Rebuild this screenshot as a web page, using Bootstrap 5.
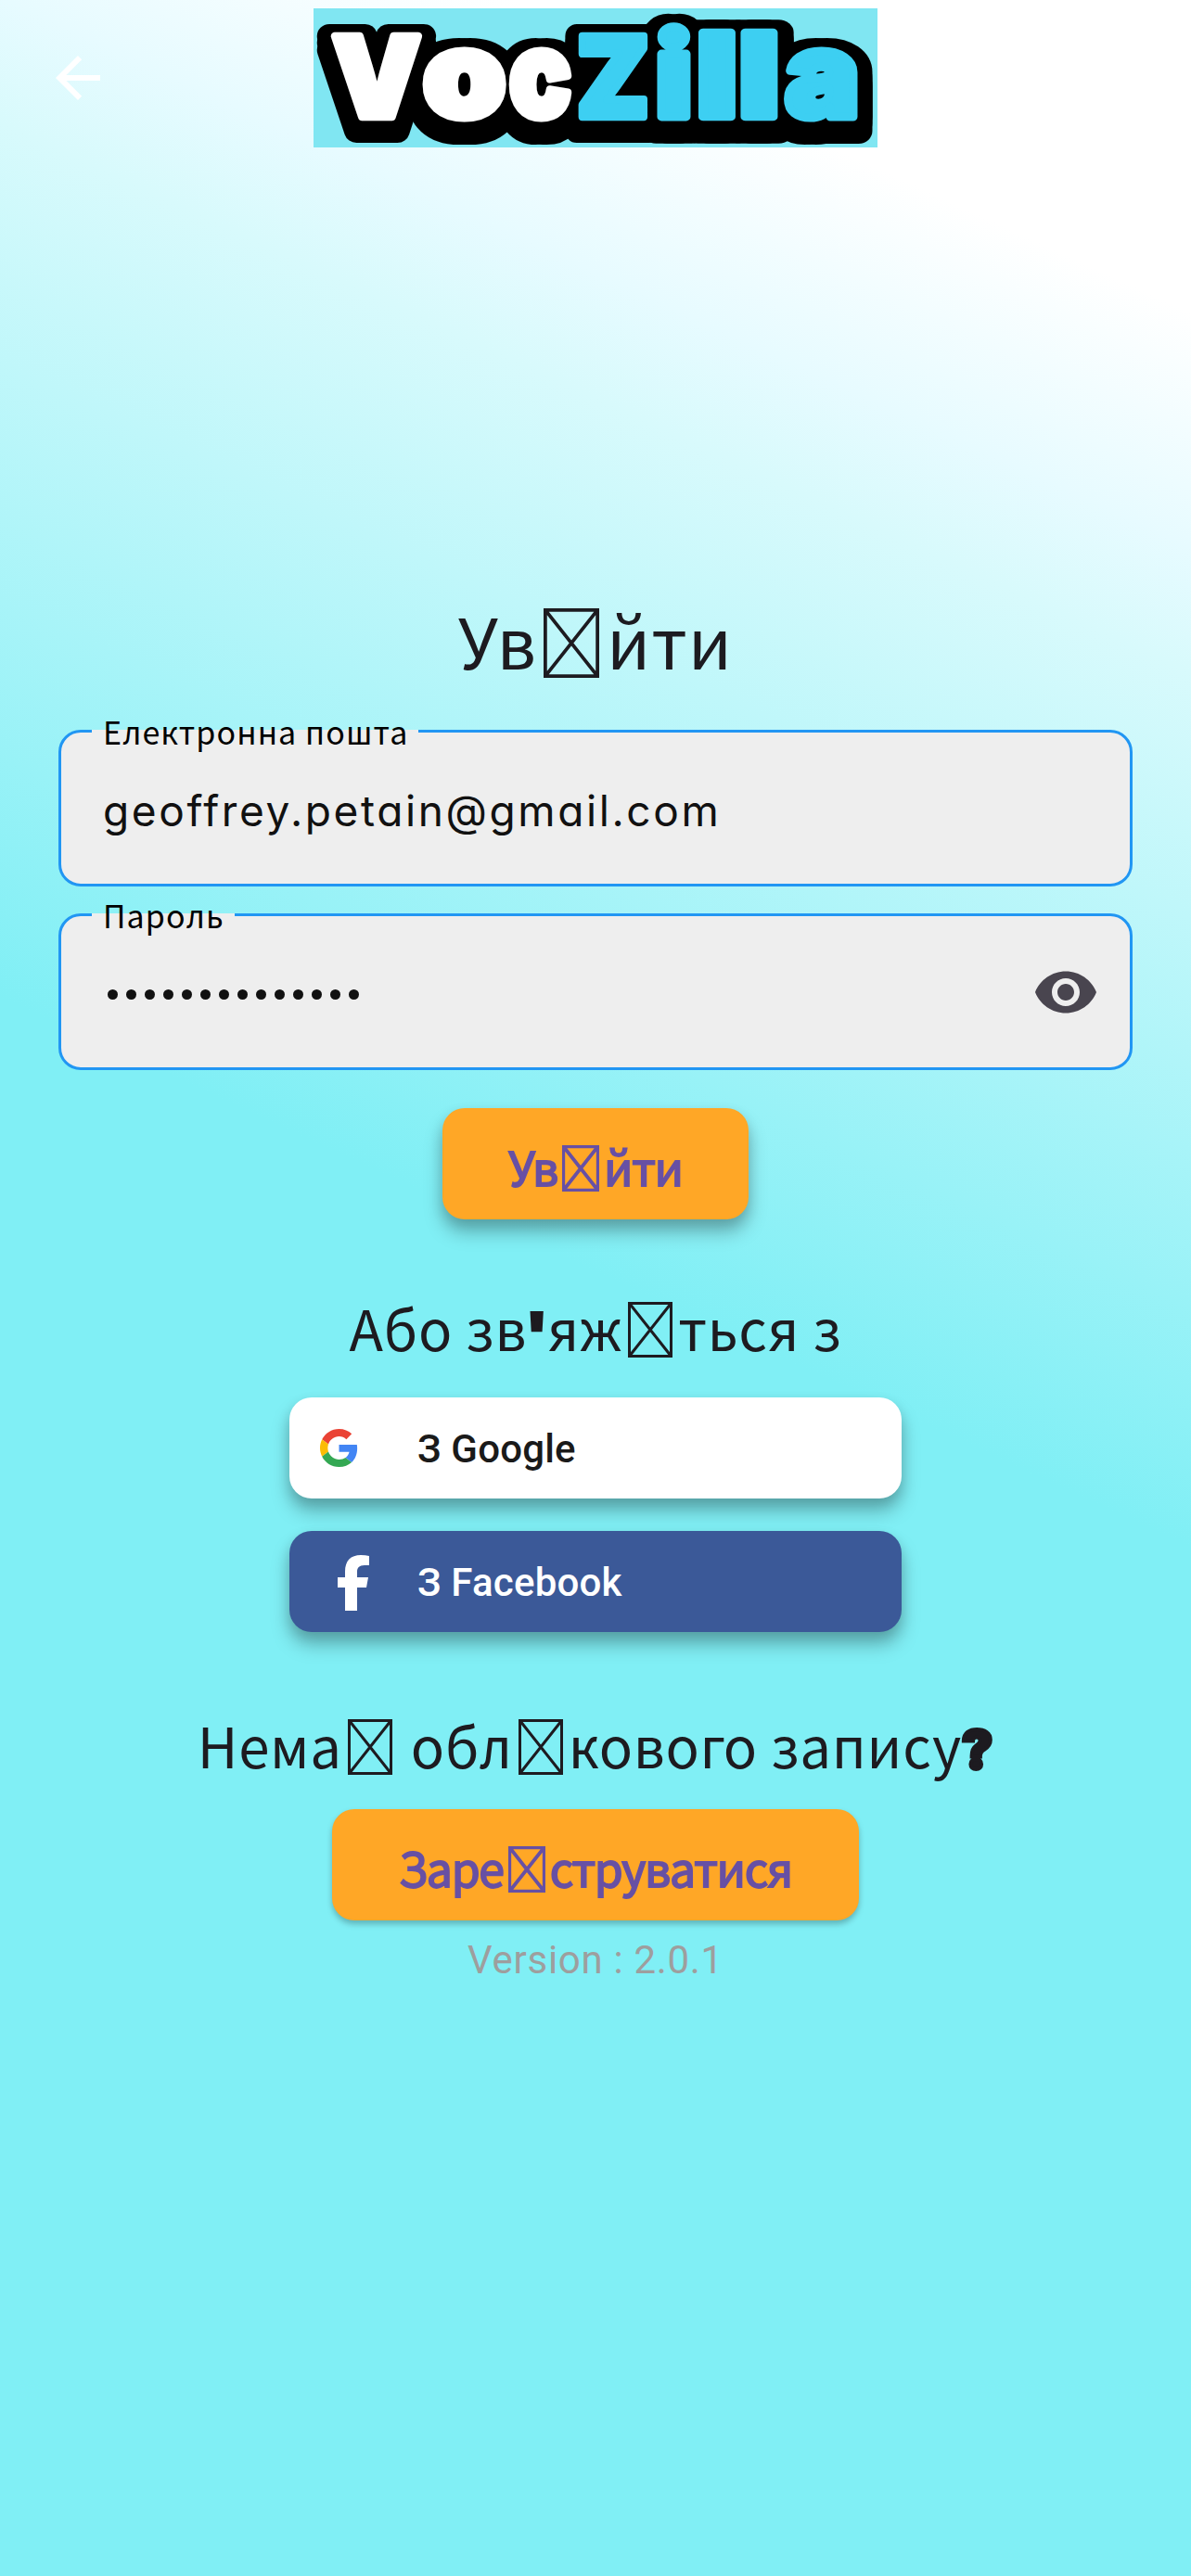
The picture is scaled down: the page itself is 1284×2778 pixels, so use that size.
<!DOCTYPE html>
<html lang="uk">
<head>
<meta charset="utf-8">
<meta name="viewport" content="width=device-width, initial-scale=1">
<title>VocZilla</title>
<link href="https://cdn.jsdelivr.net/npm/bootstrap@5.3.0/dist/css/bootstrap.min.css" rel="stylesheet">
<style>
  body{height:2778px;overflow:hidden;color:#1d1b20;font-family:"Noto Sans CJK JP",sans-serif;
    background:linear-gradient(204.81deg,#fff 10%,#e7fbff 17.5%,#d8fafc 21.5%,#80eff5 49.5%)}
  .topbar{height:168px;padding-top:9px}
  .back-btn{top:48px;left:48px;width:72px;height:72px}
  .brand{width:608px;height:150px}
  .brand text{font-family:Inter,sans-serif;font-weight:900;font-size:100px;text-anchor:middle;stroke-linejoin:round}
  .login{padding:464px 63px 0}
  h1,h2{font-weight:400;white-space:nowrap;margin:0}
  h1{font-size:75px;line-height:116px;letter-spacing:1px}
  h2{font-size:60px;line-height:90px;letter-spacing:.7px}
  .tofu{display:inline-block;fill:none;stroke:currentColor;stroke-width:3px;width:.8em;height:1em;margin:0 .1em;vertical-align:-.12em}
  .heavy{font-family:Inter,sans-serif;font-weight:900;font-size:56px;line-height:1;-webkit-text-stroke:4px currentColor}
  .field{height:168.5px;border:3px solid #2196f3;border-radius:24px;background:#eee;width:1158px;color:#111}
  .field-label{left:33px;top:-3px;height:6px;padding:0 11px 0 12px;background:#eee;color:#000;font-size:34px;letter-spacing:1.1px}
  .field-label span{line-height:50px;margin-top:-23px;white-space:nowrap}
  .field-value{padding-left:45px;font-family:Inter,sans-serif;font-feature-settings:"cv11";font-size:46px;letter-spacing:2.6px;line-height:60px}
  .dots{gap:9px;padding-left:50px;margin-top:7px}
  .dots i{width:11px;height:11px;border-radius:50%;background:#111}
  .eye{width:72px;height:72px;margin-right:33px;margin-top:2px}
  .cta{background:#ffa726;color:#6750a4;border-radius:24px;height:120px;font-size:50px;line-height:74px;letter-spacing:-1.3px;font-weight:400;-webkit-text-stroke:1.8px currentColor;white-space:nowrap;padding-top:5px}
  .cta .tofu{stroke-width:4.6px}
  .raised{box-shadow:0 14px 20px rgba(0,0,0,.25),0 6px 14px rgba(0,0,0,.12)}
  .low{box-shadow:0 4px 6px rgba(0,0,0,.25)}
  .social{width:660px;height:108.5px;border-radius:24px;font-family:Roboto,sans-serif;font-weight:500;font-size:42px;letter-spacing:.2px;color:#1a1a1a;background:#fff}
  .social-icon{width:138px}
  .facebook{background:#3b5998;color:#fff}
  .version{font-family:Roboto,sans-serif;font-size:42px;line-height:50px;letter-spacing:.7px;color:#9e9e9e}
</style>
<script src="https://cdn.jsdelivr.net/npm/bootstrap@5.3.0/dist/js/bootstrap.bundle.min.js"></script>
</head>
<body>
<svg class="d-none"><symbol id="tofu" viewBox="0 0 48 60"><path d="M1.5 1.5h45v57h-45zl45 57M46.5 1.5l-45 57"/></symbol></svg>
<header class="topbar position-relative d-flex justify-content-center">
  <svg class="back-btn position-absolute" viewBox="0 0 24 24" fill="#fff"><path d="M20 11H7.83l5.59-5.59L12 4l-8 8 8 8 1.41-1.41L7.83 13H20z"/></svg>
  <svg class="brand" viewBox="338 9 608 150" role="img" aria-label="VocZilla">
    <rect x="338" y="9" width="608" height="150" fill="#80e6f2"/>
    <defs>
      <g id="voc">
        <text transform="translate(406 126) scale(1.2 1.19)">V</text>
        <text transform="translate(500.5 126) scale(1.42 1.28)">o</text>
        <text transform="translate(582.5 126) scale(1.1 1.28)">c</text>
      </g>
      <g id="zilla">
        <text transform="translate(661 126) scale(1.12 1.19)">Z</text>
        <text transform="translate(726.5 126) scale(1.35 1.25)">i</text>
        <text transform="translate(773 126) scale(1.5 1.25)">l</text>
        <text transform="translate(818.5 126) scale(1.5 1.25)">l</text>
        <text transform="translate(886.5 126) scale(1.34 1.28)">a</text>
      </g>
      <g id="word"><use href="#voc"/><use href="#zilla"/></g>
    </defs>
    <g stroke="#000" stroke-width="22">
      <use href="#word" x="-6" y="15"/><use href="#word" x="6" y="15"/>
      <use href="#word" x="-6" y="7"/><use href="#word" x="6" y="7"/>
      <use href="#word" x="-6"/><use href="#word" x="6"/>
    </g>
    <use href="#voc" fill="#fff" stroke="#fff" stroke-width="7"/>
    <use href="#zilla" fill="#3dcff2" stroke="#3dcff2" stroke-width="7"/>
  </svg>
</header>
<main class="login d-flex flex-column align-items-center">
  <h1>Ув<svg class="tofu"><use href="#tofu"/></svg>йти</h1>

  <div class="field position-relative d-flex align-items-center" style="margin-top:39px">
    <div class="field-label position-absolute"><span class="d-block">Електронна пошта</span></div>
    <div class="field-value" style="margin-top:6px">geoffrey.petain@gmail.com</div>
  </div>
  <div class="field position-relative d-flex align-items-center justify-content-between" style="margin-top:29.5px">
    <div class="field-label position-absolute"><span class="d-block">Пароль</span></div>
    <div class="dots d-flex"><i></i><i></i><i></i><i></i><i></i><i></i><i></i><i></i><i></i><i></i><i></i><i></i><i></i><i></i></div>
    <svg class="eye" viewBox="0 0 24 24" fill="#49454f"><path d="M12 4.5C7 4.500 2.730 7.610 1 12c1.730 4.390 6 7.500 11 7.500s9.270-3.110 11-7.500c-1.730-4.390-6-7.500-11-7.500zM12 17c-2.760 0-5-2.240-5-5s2.240-5 5-5 5 2.240 5 5-2.240 5-5 5zm0-8c-1.660 0-3 1.340-3 3s1.340 3 3 3 3-1.340 3-3-1.340-3-3-3z"/></svg>
  </div>

  <button class="cta raised border-0 d-flex align-items-center justify-content-center" style="width:330px;margin-top:41.5px"><span>Ув<svg class="tofu"><use href="#tofu"/></svg>йти</span></button>

  <h2 style="margin-top:70.5px">Або зв<span class="heavy">'</span>яж<svg class="tofu"><use href="#tofu"/></svg>ться з</h2>

  <button class="social raised border-0 p-0 d-flex align-items-center text-start" style="margin-top:31.5px">
    <span class="social-icon d-flex"><svg width="41" height="41" viewBox="0 0 48 48" style="margin-left:33px"><path fill="#ea4335" d="M24 9.500c3.540 0 6.710 1.220 9.210 3.600l6.850-6.850C35.900 2.380 30.470 0 24 0 14.620 0 6.510 5.380 2.560 13.220l7.980 6.190C12.430 13.720 17.740 9.500 24 9.500z"/><path fill="#4285f4" d="M46.980 24.550c0-1.570-.15-3.090-.38-4.550H24v9.020h12.940c-.58 2.960-2.260 5.480-4.780 7.180l7.730 6c4.510-4.180 7.090-10.360 7.090-17.650z"/><path fill="#fbbc05" d="M10.530 28.590c-.48-1.450-.76-2.990-.76-4.590s.27-3.140.76-4.590l-7.980-6.190C.92 16.460 0 20.120 0 24s.92 7.540 2.560 10.780z"/><path fill="#34a853" d="M24 48c6.480 0 11.930-2.130 15.890-5.810l-7.730-6c-2.150 1.450-4.920 2.300-8.160 2.300-6.260 0-11.570-4.220-13.470-9.910l-7.980 6.190C6.510 42.620 14.620 48 24 48z"/></svg></span>
    <span style="padding-top:2px">З Google</span>
  </button>
  <button class="social facebook raised border-0 p-0 d-flex align-items-center text-start" style="margin-top:35.5px">
    <span class="social-icon d-flex"><svg width="35" height="60" viewBox="0 0 35 60" style="margin-left:52px;margin-top:4px"><path fill="#fff" d="M8 60V35H0V24h8v-6C8 6 14 0 25 0q5 0 9 1v10h-5c-6 0-8 3-8 7v6h12l-2 11H21v25z"/></svg></span>
    <span style="padding-top:2px">З Facebook</span>
  </button>

  <h2 style="margin-top:76.5px">Нема<svg class="tofu"><use href="#tofu"/></svg> обл<svg class="tofu"><use href="#tofu"/></svg>кового запису<span class="heavy">?</span></h2>
  <button class="cta low border-0 d-flex align-items-center justify-content-center" style="width:568px;margin-top:25px"><span>Заре<svg class="tofu"><use href="#tofu"/></svg>струватися</span></button>
  <div class="version" style="margin-top:18px">Version : 2.0.1</div>
</main>
</body>
</html>
